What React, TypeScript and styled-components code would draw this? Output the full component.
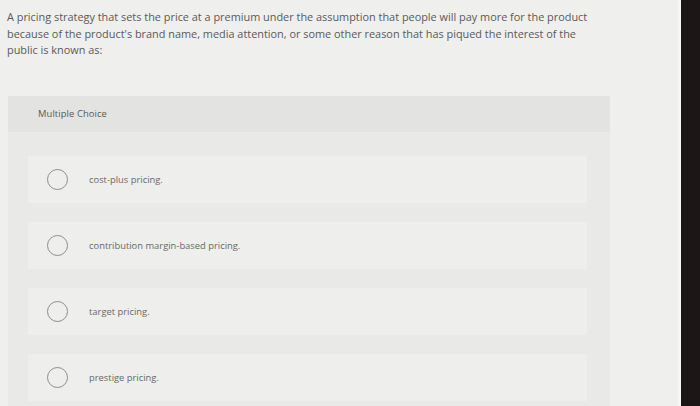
import React from 'react';
import styled, { createGlobalStyle } from 'styled-components';

const GlobalStyle = createGlobalStyle`
  html, body {
    margin: 0;
    padding: 0;
    background: #1c1616;
  }
  body {
    font-family: 'Open Sans', Lato, sans-serif;
  }
`;

const Screen = styled.div`
  display: flex;
  width: 700px;
  height: 406px;
  overflow: hidden;
`;

const Page = styled.div`
  display: flex;
  flex-direction: column;
  width: 681px;
  height: 406px;
  background: #efefed;
  border-right: 3px solid #f6f6f6;
  padding: 9px 0 0 7px;
  box-sizing: border-box;
`;

const Bezel = styled.div`
  flex: 1;
  background: #1c1616;
`;

const Question = styled.p`
  margin: 0 0 37px 0;
  font-size: 10.9px;
  line-height: 16.5px;
  color: #5a5a5a;
  white-space: nowrap;
`;

const Panel = styled.div`
  flex: 1;
  width: 602px;
  margin-left: 1px;
  background: #e9e9e7;
`;

const PanelHeader = styled.div`
  height: 36px;
  display: flex;
  align-items: center;
  padding-left: 30px;
  background: #e3e3e1;
  font-size: 9.4px;
  letter-spacing: 0.1px;
  color: #5a5a5a;
`;

const Options = styled.div`
  display: flex;
  flex-direction: column;
  gap: 19px;
  padding: 24px 23px 0 20px;
`;

const Option = styled.label`
  display: flex;
  align-items: center;
  height: 47px;
  padding-left: 19px;
  background: #eeeeec;
  font-size: 9.4px;
  color: #6a6a6a;
`;

const Radio = styled.span`
  width: 19px;
  height: 19px;
  border: 1.2px solid #8d8d92;
  border-radius: 50%;
  margin-right: 21px;
  flex-shrink: 0;
`;

const choices = [
  'cost-plus pricing.',
  'contribution margin-based pricing.',
  'target pricing.',
  'prestige pricing.',
];

export default function App() {
  return (
    <Screen>
      <GlobalStyle />
      <Page>
        <Question>
          A pricing strategy that sets the price at a premium under the assumption that people will pay more for the product
          <br />
          because of the product's brand name, media attention, or some other reason that has piqued the interest of the
          <br />
          public is known as:
        </Question>
        <Panel>
          <PanelHeader>Multiple Choice</PanelHeader>
          <Options>
            {choices.map((c) => (
              <Option key={c}>
                <Radio />
                {c}
              </Option>
            ))}
          </Options>
        </Panel>
      </Page>
      <Bezel />
    </Screen>
  );
}
